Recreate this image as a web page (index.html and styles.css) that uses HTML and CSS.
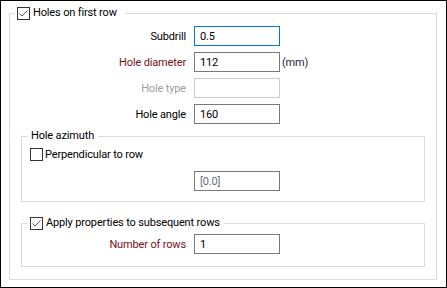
FILE: index.html
```html
<!DOCTYPE html>
<html lang="en">
<head>
    <meta charset="UTF-8">
    <title>Holes on first row</title>
    <link rel="stylesheet" href="styles.css">
</head>
<body>
    <fieldset class="group group-main">
        <legend class="group-title title-main">
            <svg class="check" width="13" height="13" viewBox="0 0 13 13"><rect x="0.5" y="0.5" width="12" height="12" fill="#fff" stroke="#333"/><polyline points="2.5,6.5 5,9 10.5,3.5" fill="none" stroke="#555"/></svg>
            <span>Holes on first row</span>
        </legend>
        <div class="field">
            <label class="field-label">Subdrill</label>
            <input class="box box-focus" type="text" value="0.5">
        </div>
        <div class="field">
            <label class="field-label label-key">Hole diameter</label>
            <input class="box" type="text" value="112">
            <span class="unit">(mm)</span>
        </div>
        <div class="field">
            <label class="field-label label-off">Hole type</label>
            <input class="box box-off" type="text" value="" disabled>
        </div>
        <div class="field">
            <label class="field-label">Hole angle</label>
            <input class="box" type="text" value="160">
        </div>

        <fieldset class="group group-inner azimuth">
            <legend class="group-title title-text">Hole azimuth</legend>
            <div class="check-row">
                <svg class="check" width="13" height="13" viewBox="0 0 13 13"><rect x="0.5" y="0.5" width="12" height="12" fill="#fff" stroke="#333"/></svg>
                <span>Perpendicular to row</span>
            </div>
            <div class="azimuth-value">
                <input class="box box-muted" type="text" value="[0.0]">
            </div>
        </fieldset>

        <fieldset class="group group-inner apply">
            <legend class="group-title title-check">
                <svg class="check" width="13" height="13" viewBox="0 0 13 13"><rect x="0.5" y="0.5" width="12" height="12" fill="#fff" stroke="#333"/><polyline points="2.5,6.5 5,9 10.5,3.5" fill="none" stroke="#555"/></svg>
                <span>Apply properties to subsequent rows</span>
            </legend>
            <div class="field">
                <label class="field-label label-key">Number of rows</label>
                <input class="box" type="text" value="1">
            </div>
        </fieldset>
    </fieldset>
</body>
</html>
```

FILE: styles.css
```css
body {
    margin: 0;
    width: 447px;
    height: 288px;
    box-sizing: border-box;
    border: 1px solid #000;
    background-color: #fff;
    font-family: Roboto, "Liberation Sans", sans-serif;
    font-size: 11px;
    letter-spacing: -0.15px;
    color: #000;
    overflow: hidden;
}
.group {
    border: 1px solid #dcdcdc;
    min-width: 0;
    margin: 0;
}
.group-main {
    margin: 4px 9px 7px 8px;
    padding: 5px 0 12px 0;
}
.group-inner {
    margin-left: 11px;
    margin-right: 11px;
    padding-left: 0;
    padding-right: 0;
}
.group-title {
    height: 16px;
    display: flex;
    align-items: center;
    gap: 3px;
    line-height: 16px;
}
.title-main {
    margin-left: 5px;
    padding: 0 8px 0 2px;
}
.title-text {
    margin-left: 6px;
    padding: 0 4px 0 3px;
}
.title-check {
    margin-left: 6px;
    padding: 0 4px 0 2px;
}
.check {
    display: block;
    flex: none;
}
.field {
    display: flex;
    align-items: center;
    height: 20px;
    margin-bottom: 6px;
}
.field:last-of-type {
    margin-bottom: 0;
}
.field-label {
    width: 176px;
    margin-right: 8px;
    text-align: right;
    flex: none;
}
.apply .field-label {
    width: 164px;
}
.label-key {
    color: #7a1020;
}
.label-off {
    color: #a0a0a0;
}
.box {
    width: 86px;
    height: 20px;
    box-sizing: border-box;
    border: 1px solid #7a7a7a;
    padding: 0 0 0 5px;
    margin: 0;
    font-family: inherit;
    font-size: 11px;
    letter-spacing: inherit;
    color: #000;
    background-color: #fff;
    outline: none;
}
.box-focus {
    border-color: #0078d7;
}
.box-off {
    border-color: #cccccc;
}
.box-muted {
    color: #6a6a80;
}
.unit {
    margin-left: 2px;
    color: #1e1e40;
}
.azimuth {
    margin-top: 4px;
    padding-top: 4px;
    padding-bottom: 10px;
}
.check-row {
    display: flex;
    align-items: center;
    gap: 2px;
    height: 13px;
    margin-left: 8px;
}
.azimuth-value {
    margin-top: 10px;
    padding-left: 172px;
    height: 20px;
}
.apply {
    margin-top: 13px;
    padding-top: 3px;
    padding-bottom: 12px;
}
```
